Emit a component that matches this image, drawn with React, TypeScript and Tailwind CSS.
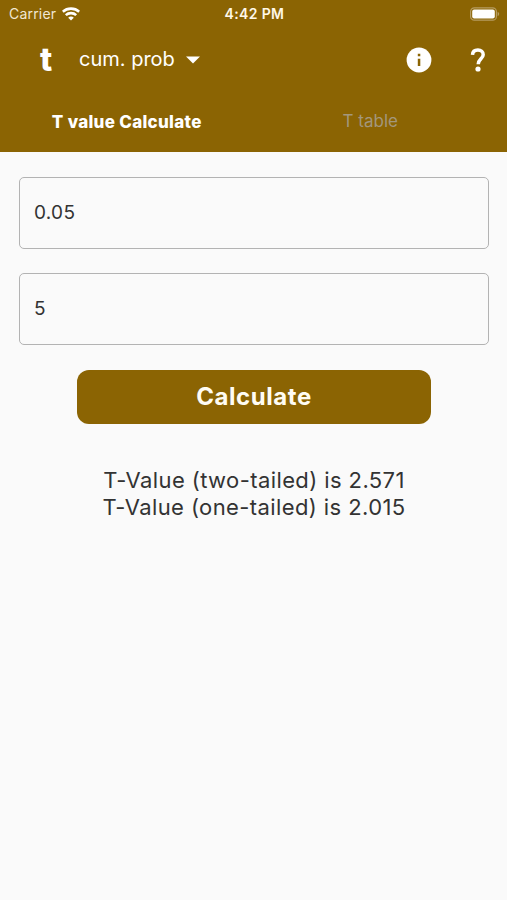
import { useState } from "react";

function WifiIcon() {
    return (
        <svg width="18" height="14" viewBox="0 0 18 14" fill="none" stroke="white" strokeWidth="2.6">
            <path d="M0.8 4.7C5.3 0.6 12.7 0.6 17.2 4.7" />
            <path d="M3.8 8.1C6.6 5.5 11.4 5.5 14.2 8.1" />
            <path d="M6.2 10.7C7.8 9.2 10.2 9.2 11.8 10.7L9 13.6Z" fill="white" stroke="none" />
        </svg>
    );
}

function BatteryIcon() {
    return (
        <svg width="31" height="14" viewBox="0 0 31 14" fill="none">
            <rect x="1.6" y="0.8" width="25.8" height="12.4" rx="3.8" stroke="#b69c61" strokeWidth="1.2" />
            <rect x="3.2" y="2.5" width="22.6" height="9" rx="2" fill="white" />
            <path d="M28.6 4.8C30.7 5.6 30.7 8.4 28.6 9.2Z" fill="#b69c61" />
        </svg>
    );
}

function InfoIcon() {
    return (
        <svg width="26" height="26" viewBox="0 0 26 26">
            <circle cx="13" cy="13" r="12.4" fill="white" />
            <path d="M11.8 6.8h2.5v2.5h-2.5zM11.8 11.7h2.5v7.4h-2.5z" fill="#8b6403" />
        </svg>
    );
}

function HelpIcon() {
    return (
        <svg width="16" height="24" viewBox="0 0 16 24" fill="none">
            <path
                d="M2.5 6.9C2.7 3.8 4.9 2.1 7.9 2.1C11.1 2.1 13.2 3.9 13.2 6.7C13.2 10.6 8.2 11 8.2 16.2"
                stroke="white"
                strokeWidth="3.5"
            />
            <circle cx="8" cy="21" r="2.6" fill="white" />
        </svg>
    );
}

export default function App() {
    const [alpha, setAlpha] = useState("0.05");
    const [degrees, setDegrees] = useState("5");

    const inputClass =
        "block h-[72px] w-full rounded-[5px] border-[1.5px] border-[#b3b3b3] bg-transparent px-[14px] pb-[2px] text-[19px] tracking-[0.3px] text-[#333333] outline-none";

    return (
        <div className="min-h-screen bg-[#fafafa] font-['Inter',sans-serif] text-[#333333]">
            <header className="h-[152px] bg-[#8b6403] text-white">
                <div className="grid h-[27px] grid-cols-3 items-center pl-[9px] pr-[7px]">
                    <div className="flex items-center gap-[6px]">
                        <span className="text-[14px] tracking-[0.2px] text-[#f1e7d2]">Carrier</span>
                        <WifiIcon />
                    </div>
                    <span className="pb-px text-center text-[14px] font-semibold tracking-[0.35px] text-[#fff8e8]">
                        4:42 PM
                    </span>
                    <div className="flex justify-end">
                        <BatteryIcon />
                    </div>
                </div>

                <div className="flex h-[65px] items-center pl-[39px] pr-[21px]">
                    <span className="w-[40px] pl-px pt-px text-[32px] font-extrabold leading-none">t</span>
                    <button className="flex items-center">
                        <span className="pb-[2px] text-[20px]">cum. prob</span>
                        <svg className="ml-[11px]" width="14" height="8" viewBox="0 0 14 8">
                            <path d="M0 0.5H14L7 7.5Z" fill="white" />
                        </svg>
                    </button>
                    <div className="ml-auto flex items-center gap-[38px]">
                        <InfoIcon />
                        <HelpIcon />
                    </div>
                </div>

                <nav className="grid h-[60px] grid-cols-2 items-center text-center">
                    <button className="pt-px text-[17px] font-extrabold tracking-[0.3px]">T value Calculate</button>
                    <button className="pr-[20px] text-[17px] text-[#a3977c]">T table</button>
                </nav>
            </header>

            <main className="pl-[19px] pr-[18px] pt-[25px]">
                <input className={inputClass} value={alpha} onChange={(e) => setAlpha(e.target.value)} />
                <input
                    className={`${inputClass} mt-6`}
                    value={degrees}
                    onChange={(e) => setDegrees(e.target.value)}
                />

                <button className="mx-auto mt-[25px] block h-[54px] w-[354px] rounded-[12px] bg-[#8b6403] text-[24px] font-bold tracking-[0.55px] text-[#fffcf3]">
                    Calculate
                </button>

                <div className="mt-[43px] text-center text-[22px] leading-[27px] tracking-[0.4px]">
                    <p>T-Value (two-tailed) is 2.571</p>
                    <p>T-Value (one-tailed) is 2.015</p>
                </div>
            </main>
        </div>
    );
}
